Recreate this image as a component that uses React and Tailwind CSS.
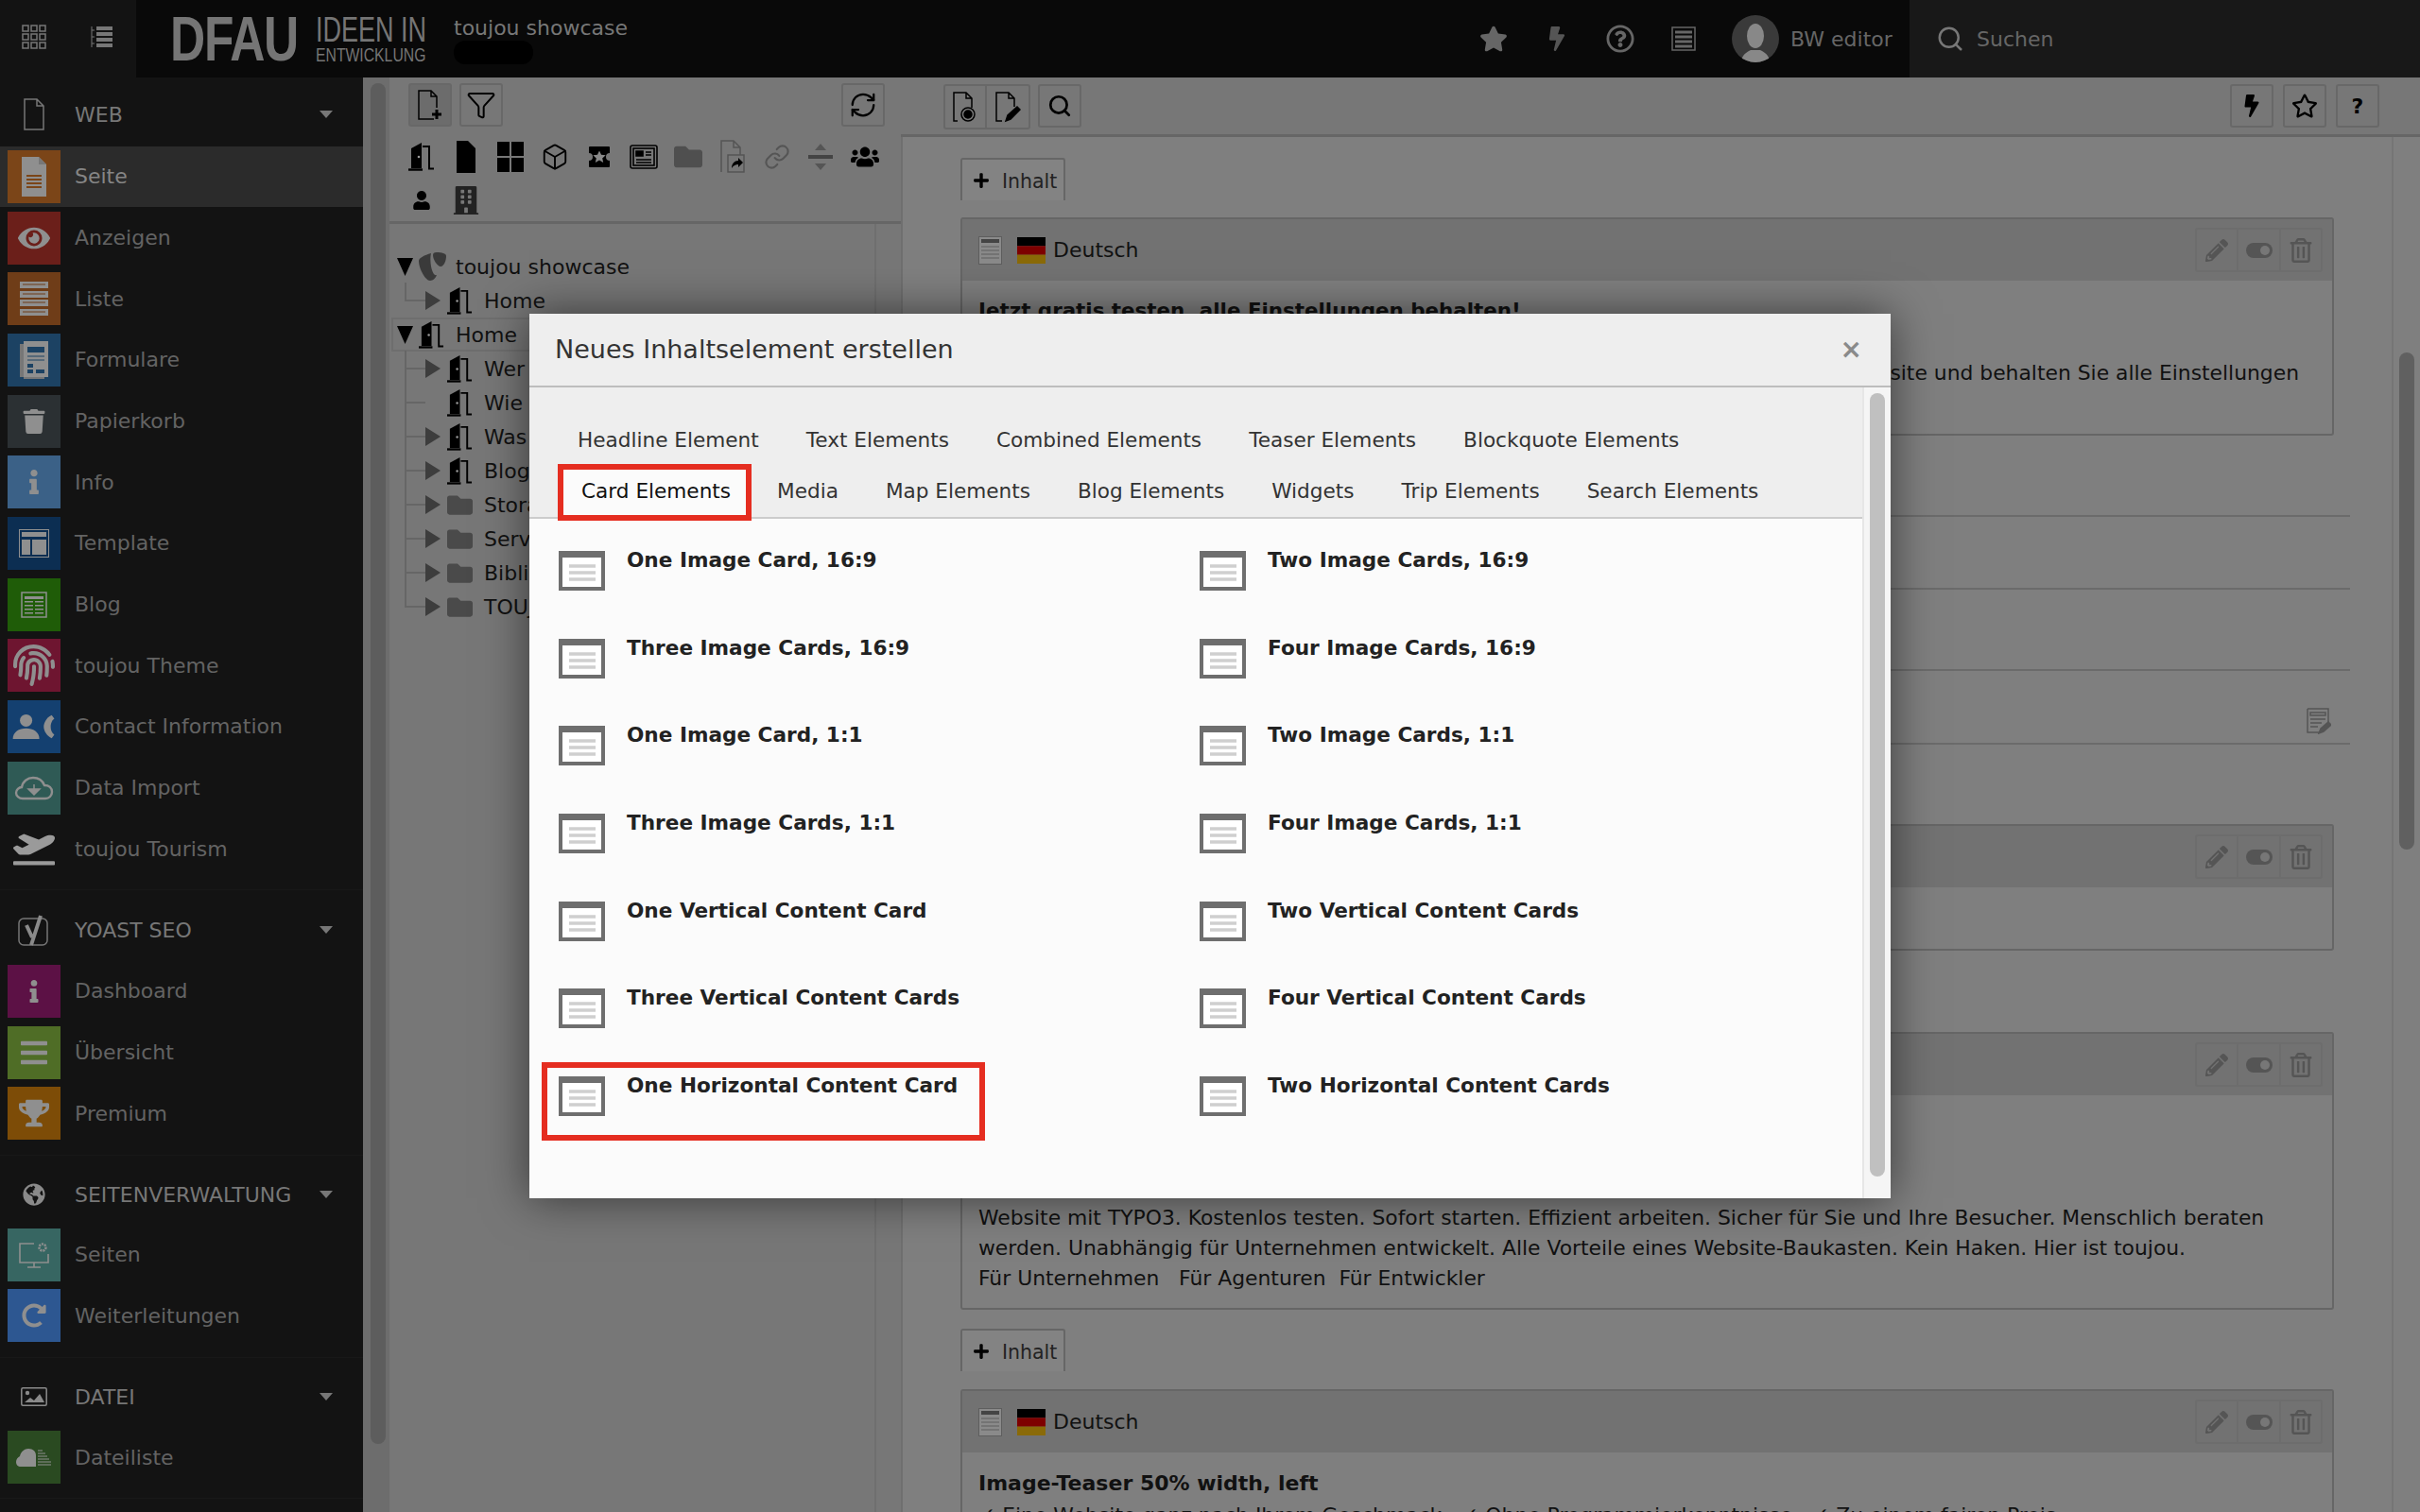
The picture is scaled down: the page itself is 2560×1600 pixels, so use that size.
import React from 'react';
import { FaEye, FaTrash, FaInfo, FaFingerprint, FaPlaneDeparture, FaBars, FaTrophy, FaGlobeAmericas, FaRedoAlt, FaStar, FaBolt, FaUsers, FaUser, FaBuilding, FaFolder, FaPencilAlt, FaRegStar, FaRegTrashAlt, FaRegQuestionCircle, FaPlus } from 'react-icons/fa';
import { Search, Box, Filter, RefreshCw, Link as LinkIcon } from 'lucide-react';

const Door = ({ c = '#000', s = 27 }) => (
  <svg width={s} height={s * 1.11} viewBox="0 0 28 31">
    <path d="M3 28V7L14 1v27z" fill={c} />
    <path d="M0 29.5h15" stroke={c} strokeWidth="2.4" />
    <path d="M15 5h7v23.5h5" fill="none" stroke={c} strokeWidth="2" />
    <circle cx="11" cy="16" r="1.3" fill="#999" />
  </svg>
);

const PageTile = () => (
  <svg width="26" height="42" viewBox="0 0 26 42"><path d="M0 0h18l8 8v34H0z" fill="#8f8f8f" /><path d="M18 0l8 8h-8z" fill="#777" /><path d="M5 20h16M5 24h16M5 28h16M5 32h16" stroke="#7b4518" strokeWidth="2" /></svg>
);
const ListTile = () => (
  <svg width="30" height="36" viewBox="0 0 30 36" fill="#8f8f8f"><path d="M0 0h30v7H0zM0 10h30v7H0zM0 19h30v7H0zM0 29h30v7H0z" /><path d="M3 3h24M3 13h24M3 22h24M3 32h24" stroke="#6f3d18" /></svg>
);
const FormTile = () => (
  <svg width="30" height="40" viewBox="0 0 30 40"><path d="M0 3h4v37h22v-2H0z" fill="#777" /><rect x="4" y="0" width="26" height="38" fill="#8f8f8f" /><path d="M8 6h18v6H8zM8 24h6v4H8zM8 30h6v4H8zM17 30h9v4h-9z" fill="#1c4263" /><path d="M8 16h18M8 20h18" stroke="#1c4263" /></svg>
);
const TemplateTile = () => (
  <svg width="32" height="30" viewBox="0 0 32 30"><rect x=".5" y=".5" width="31" height="29" fill="none" stroke="#8f8f8f" /><rect x="3" y="3" width="26" height="5" fill="#8f8f8f" /><rect x="3" y="11" width="9" height="16" fill="#8f8f8f" /><rect x="14" y="11" width="15" height="16" fill="#8f8f8f" /></svg>
);
const BlogTile = () => (
  <svg width="28" height="28" viewBox="0 0 28 28"><rect x="1" y="1" width="26" height="26" fill="none" stroke="#8f8f8f" strokeWidth="1.5" /><path d="M4 5h20v3H4zM4 10h9v1.6H4zM15 10h9v1.6h-9zM4 14h9v1.6H4zM15 14h9v1.6h-9zM4 18h9v1.6H4zM15 18h9v1.6h-9zM4 22h9v1.6H4zM15 22h9v1.6h-9z" fill="#8f8f8f" /></svg>
);
const ContactTile = () => (
  <svg width="46" height="28" viewBox="0 0 48 30" fill="#8f8f8f"><circle cx="15" cy="8" r="7" /><path d="M0 29c0-8 7-12 15-12s15 4 15 12z" /><path d="M44 2l3 4c-5 3-6 14 0 18l-3 4c-5-2-9-8-9-13s4-11 9-13z" /></svg>
);
const MonitorTile = () => (
  <svg width="32" height="28" viewBox="0 0 32 28" fill="none" stroke="#8f8f8f" strokeWidth="1.6"><path d="M16 2H1v20h30v-9M16 22v5M9 27h14" /><circle cx="25" cy="6" r="3.5" strokeWidth="2.5" strokeDasharray="2 1" /></svg>
);
const CloudDown = () => (
  <svg width="42" height="26" viewBox="0 0 42 26" fill="none" stroke="#8f8f8f" strokeWidth="2.4"><path d="M9 24c-4 0-7-3-7-6s3-6 6-6c1-6 6-10 12-10 6 0 10 3 12 8 5 0 8 3 8 7s-3 7-7 7z" /><path d="M21 9v6M15 14h12l-6 6z" fill="#8f8f8f" strokeWidth="1.5" /></svg>
);
const CloudList = () => (
  <svg width="38" height="20" viewBox="0 0 38 20" fill="#8f8f8f"><path d="M0 15c0-3 2-5 4-6 1-5 5-8 9-8 5 0 8 3 8 7v12H5c-3 0-5-2-5-5z" /><path d="M23 3h5M23 6h8M23 9h10M23 12h12M23 15h14M23 18h14" stroke="#8f8f8f" strokeWidth="1.2" /></svg>
);
const ImageIcon = () => (
  <svg width="28" height="20" viewBox="0 0 28 20"><rect x=".8" y=".8" width="26.400" height="18.400" rx="1.500" fill="none" stroke="#8a8a8a" strokeWidth="1.500" /><circle cx="7" cy="6" r="2.200" fill="#8a8a8a" /><path d="M4 16l6-5 4 3 6-7 5 9z" fill="#8a8a8a" /></svg>
);
const Yoast = () => (
  <svg width="34" height="34" viewBox="0 0 34 34" fill="none" stroke="#777"><rect x="1" y="5" width="30" height="28" rx="5" strokeWidth="1.5" /><path d="M9 12l6 13M24 2L14 33" strokeWidth="4" stroke="#8a8a8a" /></svg>
);
const PageOutline = () => (
  <svg width="22" height="34" viewBox="0 0 22 34" fill="none" stroke="#777" strokeWidth="1.5"><path d="M1 1h13l7 7v25H1zM14 1v7h7" /></svg>
);
const Triangle = () => (
  <svg width="14" height="8" viewBox="0 0 14 8"><path d="M0 0h14L7 8z" fill="#777" /></svg>
);
const Grid9 = () => (
  <svg width="26" height="26" viewBox="0 0 26 26" fill="none" stroke="#777" strokeWidth="1.5">
    {[1, 10, 19].map((y) => [1, 10, 19].map((x) => <rect key={x + '-' + y} x={x} y={y} width="6" height="6" />))}
  </svg>
);
const TreeList = () => (
  <svg width="24" height="24" viewBox="0 0 24 24" fill="#777"><path d="M1 1v22M1 5h3M1 12h3M1 19h3" stroke="#777" /><path d="M6 1h17v4H6zM6 7h17v4H6zM6 13h17v4H6zM6 19h17v4H6z" /></svg>
);
const ContentIcon = () => (
  <svg width="25" height="30" viewBox="0 0 25 30"><rect x=".5" y=".5" width="24" height="29" fill="#8a8a8a" stroke="#5e5e5e" /><rect x="3" y="3" width="19" height="4" fill="#444" /><path d="M3 11h19M3 15h19M3 19h19M3 23h19" stroke="#5e5e5e" /></svg>
);
const Flag = () => (
  <svg width="30" height="28" viewBox="0 0 30 28"><rect width="30" height="9.4" fill="#000" /><rect y="9.3" width="30" height="9.4" fill="#7e0000" /><rect y="18.6" width="30" height="9.4" fill="#8a6a08" /></svg>
);
const Toggle = () => (
  <svg width="28" height="16" viewBox="0 0 28 16"><rect width="28" height="16" rx="8" fill="#555" /><circle cx="20" cy="8" r="5" fill="#777" /></svg>
);
const CardIcon = () => (
  <svg width="49" height="42" viewBox="0 0 49 42"><rect width="49" height="42" fill="#6e6e6e" /><rect x="4" y="7" width="41" height="31" fill="#fff" /><path d="M11 16h28M11 23h28M11 30h28" stroke="#cfcfcf" strokeWidth="3.4" /></svg>
);
const Typo3 = () => (
  <svg width="29" height="30" viewBox="0 0 29 30"><path d="M13 1C6 3 0 6 0 9c0 8 7 21 12 21 3 0 6-3 7-6-5 2-8-15-6-23z" fill="#3a3a3a" /><path d="M19 0c-3 0-4 1-4 3 0 5 5 12 8 12 4 0 6-7 6-11 0-3-5-4-10-4z" fill="#3a3a3a" /></svg>
);
const TreeArrow = ({ down }) =>
  down ? (
    <svg width="17" height="19" viewBox="0 0 17 19"><path d="M0 0h17L8.500 19z" fill="#000" /></svg>
  ) : (
    <svg width="16" height="20" viewBox="0 0 16 20"><path d="M0 0l16 10L0 20z" fill="#3d3d3d" /></svg>
  );
const StarTicket = () => (
  <svg width="24" height="24" viewBox="0 0 24 24"><path d="M2 1h20a1 1 0 011 1v6a4 4 0 000 8v6a1 1 0 01-1 1H2a1 1 0 01-1-1v-6a4 4 0 000-8V2a1 1 0 011-1z" fill="#000" /><path d="M12 5.500l2 4.300 4.700.5-3.500 3.100 1 4.600-4.200-2.400-4.200 2.400 1-4.600-3.500-3.100 4.700-.5z" fill="#8a8a8a" /></svg>
);

const tile = 'w-14 h-14 flex items-center justify-center shrink-0';

const NavRow = ({ bg, icon, label, active }) => (
  <div className={`h-[64.67px] flex items-center pl-2 ${active ? 'bg-[#2b2b2b]' : ''}`}>
    <div className={tile} style={{ backgroundColor: bg }}>{icon}</div>
    <span className={`ml-[15px] text-[22px] ${active ? 'text-[#858585]' : 'text-[#636363]'}`}>{label}</span>
  </div>
);

const NavHead = ({ icon, label, cls }) => (
  <div className={`${cls} flex items-center pl-2 border-t border-[#181818]`}>
    <div className="w-14 flex justify-center shrink-0">{icon}</div>
    <span className="ml-[15px] text-[22px] text-[#777]">{label}</span>
    <span className="ml-auto mr-[32px] flex"><Triangle /></span>
  </div>
);

const I = 'text-[34px] text-[#8f8f8f]';

const Sidebar = () => (
  <div className="w-[384px] shrink-0 bg-[#131313] flex flex-col">
    <div className="h-[72.67px] flex items-center pl-2 pt-[6px]">
      <div className="w-14 flex justify-center"><PageOutline /></div>
      <span className="ml-[15px] text-[22px] text-[#777]">WEB</span>
      <span className="ml-auto mr-[32px] flex"><Triangle /></span>
    </div>
    <NavRow active bg="#7b4518" icon={<PageTile />} label="Seite" />
    <NavRow bg="#6b1f1a" icon={<FaEye className={I} />} label="Anzeigen" />
    <NavRow bg="#6f3d18" icon={<ListTile />} label="Liste" />
    <NavRow bg="#1c4263" icon={<FormTile />} label="Formulare" />
    <NavRow bg="#2b3033" icon={<FaTrash className="text-[26px] text-[#8f8f8f]" />} label="Papierkorb" />
    <NavRow bg="#3b6187" icon={<FaInfo className="text-[26px] text-[#8f8f8f]" />} label="Info" />
    <NavRow bg="#0c2e52" icon={<TemplateTile />} label="Template" />
    <NavRow bg="#1f5c08" icon={<BlogTile />} label="Blog" />
    <NavRow bg="#6e1530" icon={<FaFingerprint className="text-[44px] text-[#8f8f8f]" />} label="toujou Theme" />
    <NavRow bg="#144070" icon={<ContactTile />} label="Contact Information" />
    <NavRow bg="#2f5a55" icon={<CloudDown />} label="Data Import" />
    <NavRow bg="transparent" icon={<FaPlaneDeparture className="text-[44px] text-[#9a9a9a]" />} label="toujou Tourism" />
    <NavHead cls="mt-[10px] h-[76px] pt-[10px]" icon={<Yoast />} label="YOAST SEO" />
    <NavRow bg="#5c1145" icon={<FaInfo className="text-[24px] text-[#8f8f8f]" />} label="Dashboard" />
    <NavRow bg="#4f6d26" icon={<FaBars className="text-[32px] text-[#8f8f8f]" />} label="Übersicht" />
    <NavRow bg="#7d4c07" icon={<FaTrophy className="text-[32px] text-[#8f8f8f]" />} label="Premium" />
    <NavHead cls="mt-[11px] h-[74px] pt-[10px]" icon={<FaGlobeAmericas className="text-[24px] text-[#8a8a8a]" />} label="SEITENVERWALTUNG" />
    <NavRow bg="#376662" icon={<MonitorTile />} label="Seiten" />
    <NavRow bg="#2d5791" icon={<FaRedoAlt className="text-[26px] text-[#8f8f8f]" />} label="Weiterleitungen" />
    <NavHead cls="mt-[11px] h-[74px] pt-[10px]" icon={<ImageIcon />} label="DATEI" />
    <NavRow bg="#2a4a21" icon={<CloudList />} label="Dateiliste" />
    <div className="mt-[11px] border-t border-[#181818]" />
  </div>
);

const Btn = ({ children, cls = '' }) => (
  <div className={`w-[46px] h-[46px] rounded-[3px] border-2 border-[#686868] flex items-center justify-center ${cls}`}>{children}</div>
);

const FileAdd = () => (
  <svg width="28" height="34" viewBox="0 0 28 34" fill="none" stroke="#000" strokeWidth="1.5"><path d="M18 32H2V2h13l6 6v12M15 2v6h6" /><path d="M21 22v10M16 27h10" strokeWidth="3" /></svg>
);
const FileEye = () => (
  <svg width="28" height="34" viewBox="0 0 28 34" fill="none" stroke="#000" strokeWidth="1.5"><path d="M6 32H2V2h13l6 6v10M15 2v6h6" /><circle cx="17" cy="25" r="7" /><circle cx="17" cy="25" r="4" fill="#000" /></svg>
);
const FileEdit = () => (
  <svg width="28" height="34" viewBox="0 0 28 34" fill="none" stroke="#000" strokeWidth="1.5"><path d="M8 32H2V2h13l6 6v9M15 2v6h6" /><path d="M12 32l2-6 10-9 3 3-10 10z" fill="#000" /></svg>
);
const FileLink = () => (
  <svg width="26" height="36" viewBox="0 0 26 36" fill="none" stroke="#555" strokeWidth="1.5"><path d="M1 34V1h13l7 7v8M14 1v7h7" /><rect x="8" y="16" width="17" height="18" fill="#777" /><path d="M12 30c0-5 3-8 7-8v-3l5 5-5 5v-3c-3 0-5 1-7 4z" fill="#000" stroke="none" /></svg>
);
const NewsIcon = () => (
  <svg width="30" height="26" viewBox="0 0 30 26" fill="none" stroke="#000" strokeWidth="1.6"><rect x="1" y="1" width="28" height="24" rx="2" /><rect x="4" y="4" width="22" height="18" /><path d="M7 7h7v5H7zM17 8h6M17 11h6M7 16h16M7 19h16" fill="#000" /></svg>
);
const Divider = () => (
  <svg width="26" height="28" viewBox="0 0 26 28"><path d="M13 0l6 7H7zM13 28l-6-7h12z" fill="#555" /><rect y="12" width="26" height="4" fill="#444" /></svg>
);
const FileSolid = () => (
  <svg width="20" height="34" viewBox="0 0 20 34"><path d="M0 0h12l8 8v26H0z" fill="#000" /></svg>
);
const Quad = () => (
  <svg width="28" height="32" viewBox="0 0 28 32"><path d="M0 0h13v15H0zM15 0h13v15H15zM0 17h13v15H0zM15 17h13v15H15z" fill="#000" /></svg>
);

const TreeLines = ({ v }) => (
  <>
    <span className={`absolute left-[16px] w-[2px] bg-[#666] ${v}`} />
    <span className="absolute left-[16px] top-[17px] w-[22px] h-[2px] bg-[#666]" />
  </>
);

const TreeRow = ({ label, folder, arrow = true, v = '-top-[1px] h-[37px]' }) => (
  <div className="relative h-9 flex items-center pl-[38px]">
    <TreeLines v={v} />
    <span className="w-[23px] flex shrink-0">{arrow && <TreeArrow />}</span>
    {folder ? <FaFolder className="text-[27px] text-[#4a4a4a] shrink-0" /> : <Door />}
    <span className="ml-[12px] text-[22px] text-[#111] whitespace-nowrap">{label}</span>
  </div>
);

const TreePanel = () => (
  <div className="w-[541px] shrink-0 flex flex-col bg-[#777] relative">
    <div className="flex justify-between pl-5 pr-[17px] pt-[6px] h-[61px]">
      <div className="flex gap-2">
        <Btn cls="bg-[#6c6c6c] border-[#5e5e5e]"><FileAdd /></Btn>
        <Btn><Filter size={32} strokeWidth={1.5} color="#000" /></Btn>
      </div>
      <Btn><RefreshCw size={30} strokeWidth={1.8} color="#000" /></Btn>
    </div>
    <div className="flex flex-wrap content-start pl-[11px] h-[94px] border-b-[3px] border-[#666]">
      {[
        <Door s={28} />, <FileSolid />, <Quad />,
        <Box size={30} strokeWidth={1.5} color="#000" />, <StarTicket />, <NewsIcon />,
        <FaFolder className="text-[30px] text-[#4f4f4f]" />, <FileLink />, <LinkIcon size={28} strokeWidth={1.8} color="#555" />, <Divider />,
        <FaUsers className="text-[30px] text-black" />, <FaUser className="text-[20px] text-black" />, <FaBuilding className="text-[30px] text-[#222]" />,
      ].map((ic, i) => (
        <div key={i} className="w-[46.9px] h-[46px] flex items-center justify-center">{ic}</div>
      ))}
    </div>
    <div className="flex-1 pt-[27px] border-r-2 border-[#6f6f6f] mr-[26px]">
      <div className="relative h-9 flex items-center pl-2">
        <span className="w-[23px] flex shrink-0"><TreeArrow down /></span>
        <Typo3 />
        <span className="ml-[10px] text-[22px] text-[#111] whitespace-nowrap">toujou showcase</span>
      </div>
      <TreeRow label="Home" v="-top-[1px] h-[19px]" />
      <div className="relative h-9 flex items-center pl-1 border-2 border-[#6e6e6e] ml-[2px]">
        <span className="w-[23px] flex shrink-0"><TreeArrow down /></span>
        <Door />
        <span className="ml-[12px] text-[22px] text-[#111] whitespace-nowrap">Home</span>
      </div>
      <TreeRow label="Wer" />
      <TreeRow label="Wie" arrow={false} />
      <TreeRow label="Was" />
      <TreeRow label="Blog" />
      <TreeRow label="Storage" folder />
      <TreeRow label="Service" folder />
      <TreeRow label="Bibliothek" folder />
      <TreeRow label="TOUJOU" folder v="-top-[1px] h-[19px]" />
    </div>
  </div>
);

const Card = ({ h, children }) => (
  <div className={`w-[1453px] border-2 border-[#666] rounded-[3px] ${h}`}>
    <div className="h-[65px] bg-[#727272] flex items-center pl-[17px] pr-[10px]">
      <ContentIcon />
      <span className="ml-4 flex"><Flag /></span>
      <span className="ml-2 text-[22px] text-[#111]">Deutsch</span>
      <div className="ml-auto w-[135px] h-[47px] flex border-2 border-[#6d6d6d] rounded-[3px]">
        <div className="w-[44px] flex items-center justify-center border-r-2 border-[#6d6d6d]"><FaPencilAlt className="text-[24px] text-[#555]" /></div>
        <div className="w-[45px] flex items-center justify-center border-r-2 border-[#6d6d6d]"><Toggle /></div>
        <div className="flex-1 flex items-center justify-center"><FaRegTrashAlt className="text-[26px] text-[#555]" /></div>
      </div>
    </div>
    <div className="pl-[17px] pr-4 text-[21.85px] text-[#111]">{children}</div>
  </div>
);

const Inhalt = ({ cls }) => (
  <div className={`${cls} w-[111px] h-[45px] rounded-t-[3px] border-2 border-b-0 border-[#666] bg-[#838383] flex items-center pl-[11px]`}>
    <FaPlus className="text-[18px] text-black" />
    <span className="ml-[13px] mt-[3px] text-[20.5px] text-[#222]">Inhalt</span>
  </div>
);

const EditLines = () => (
  <svg width="26" height="28" viewBox="0 0 26 28" fill="none" stroke="#555" strokeWidth="1.5"><path d="M1 1h22v14M1 1v25h12M4 5h16v3H4zM4 12h16M4 16h12M4 20h8" /><path d="M13 27l2-5 8-7 3 3-8 7z" fill="#555" /></svg>
);

const RightPanel = () => (
  <div className="flex-1 flex flex-col bg-[#7f7f7f] overflow-hidden">
    <div className="h-[63px] shrink-0 bg-[#777] border-b-[3px] border-[#666] flex items-start pt-[7px] pl-[45px] pr-[43px]">
      <div className="flex rounded-[3px] border-2 border-[#686868]">
        <div className="w-[44px] h-[44px] flex items-center justify-center border-r-2 border-[#686868]"><FileEye /></div>
        <div className="w-[44px] h-[44px] flex items-center justify-center"><FileEdit /></div>
      </div>
      <Btn cls="ml-[8px]"><Search size={26} strokeWidth={2.5} color="#000" /></Btn>
      <div className="ml-auto flex gap-[10px]">
        <Btn><FaBolt className="text-[24px] text-black" /></Btn>
        <Btn><FaRegStar className="text-[28px] text-black" /></Btn>
        <Btn><span className="text-[22px] font-bold text-black">?</span></Btn>
      </div>
    </div>
    <div className="flex-1 flex overflow-hidden">
      <div className="w-[1577px] shrink-0 pl-[61px] border-l-2 border-[#6f6f6f] pt-[22px]">
        <Inhalt />
        <div className="mt-[18px]">
          <Card h="h-[231px]">
            <p className="mt-[21px] text-[21.4px] font-bold whitespace-nowrap leading-[22px]">Jetzt gratis testen, alle Einstellungen behalten!</p>
            <p className="mt-[44px] pr-[19px] whitespace-nowrap leading-[22px] flex justify-end">Website und behalten Sie alle Einstellungen</p>
          </Card>
        </div>
        <div className="mt-[84px] w-[1470px] border-t-2 border-[#6b6b6b] h-[77px]" />
        <div className="w-[1470px] border-t-2 border-[#6b6b6b] h-[86px]" />
        <div className="w-[1470px] border-t-2 border-b-2 border-[#6b6b6b] h-[80px] flex items-end justify-end pb-[9px] pr-[20px]"><EditLines /></div>
        <div className="mt-[84px]"><Card h="h-[134px]" /></div>
        <div className="mt-[86px]">
          <Card h="h-[294px]">
            <div className="mt-[114px] leading-[32.2px] whitespace-nowrap">
              <p>Website mit TYPO3. Kostenlos testen. Sofort starten. Effizient arbeiten. Sicher für Sie und Ihre Besucher. Menschlich beraten</p>
              <p>werden. Unabhängig für Unternehmen entwickelt. Alle Vorteile eines Website-Baukasten. Kein Haken. Hier ist toujou.</p>
              <p>Für Unternehmen &nbsp; Für Agenturen &nbsp;Für Entwickler</p>
            </div>
          </Card>
        </div>
        <Inhalt cls="mt-[20px]" />
        <div className="mt-[19px]">
          <Card h="h-[300px]">
            <p className="mt-[21px] text-[22px] font-bold leading-[24px]">Image-Teaser 50% width, left</p>
            <p className="mt-[10px] whitespace-nowrap leading-[24px]">✓ Eine Website ganz nach Ihrem Geschmack &nbsp; ✓ Ohne Programmierkenntnisse &nbsp; ✓ Zu einem fairen Preis</p>
          </Card>
        </div>
      </div>
      <div className="flex-1 border-l-2 border-[#757575] pl-[6px]">
        <div className="mt-[228px] w-4 h-[526px] rounded-lg bg-[#606060]" />
      </div>
    </div>
  </div>
);

const TopIcon = ({ children }) => <div className="w-[67px] flex justify-center">{children}</div>;

const Topbar = () => (
  <div className="h-[82px] shrink-0 flex bg-[#090909]">
    <div className="w-[144px] bg-[#131313] flex items-center pb-[4px]">
      <div className="w-[72px] flex justify-center"><Grid9 /></div>
      <div className="w-[72px] flex justify-center"><TreeList /></div>
    </div>
    <div className="w-[336px] pl-[36px] flex items-center gap-[19px] overflow-hidden">
      <span className="font-['Liberation_Sans',sans-serif] font-bold text-[66px] leading-none text-[#757575] origin-left scale-x-[0.78] w-[135px] shrink-0 tracking-tight">DFAU</span>
      <div className="font-['Liberation_Sans',sans-serif] text-[#757575] flex flex-col w-[116px] shrink-0">
        <span className="text-[37px] leading-[34px] origin-left scale-x-[0.73] whitespace-nowrap">IDEEN IN</span>
        <span className="text-[21px] leading-[18px] origin-left scale-x-[0.75] whitespace-nowrap">ENTWICKLUNG</span>
      </div>
    </div>
    <div className="flex flex-col">
      <span className="text-[22px] leading-[26px] mt-[17px] text-[#777]">toujou showcase</span>
      <span className="w-[84px] h-[25px] rounded-xl bg-black" />
    </div>
    <div className="ml-auto flex items-center">
      <TopIcon><FaStar className="text-[30px] text-[#666]" /></TopIcon>
      <TopIcon><FaBolt className="text-[26px] text-[#555]" /></TopIcon>
      <TopIcon><FaRegQuestionCircle className="text-[30px] text-[#666]" /></TopIcon>
      <TopIcon><svg width="26" height="26" viewBox="0 0 26 26" fill="none" stroke="#666" strokeWidth="1.5"><rect x="1" y="1" width="24" height="24" /><path d="M4 6h18M4 11h18M4 16h18M4 21h18" strokeWidth="3" /></svg></TopIcon>
      <div className="ml-[18px] w-[50px] h-[50px] rounded-full bg-[#3a3a3a] overflow-hidden flex items-end justify-center">
        <svg width="34" height="42" viewBox="0 0 34 42" fill="#888"><ellipse cx="17" cy="14" rx="9" ry="13" /><path d="M2 42c0-8 6-11 10-13h10c4 2 10 5 10 13z" /></svg>
      </div>
      <span className="ml-[12px] mr-[20px] text-[22px] text-[#666] w-[106px] whitespace-nowrap">BW editor</span>
      <div className="w-[540px] h-full bg-[#181818] flex items-center pl-[28px]">
        <Search size={30} strokeWidth={2} color="#777" />
        <span className="ml-[13px] text-[22px] text-[#666]">Suchen</span>
      </div>
    </div>
  </div>
);

const items = [
  ['One Image Card, 16:9', 'Two Image Cards, 16:9'],
  ['Three Image Cards, 16:9', 'Four Image Cards, 16:9'],
  ['One Image Card, 1:1', 'Two Image Cards, 1:1'],
  ['Three Image Cards, 1:1', 'Four Image Cards, 1:1'],
  ['One Vertical Content Card', 'Two Vertical Content Cards'],
  ['Three Vertical Content Cards', 'Four Vertical Content Cards'],
  ['One Horizontal Content Card', 'Two Horizontal Content Cards'],
];

const Item = ({ label, boxed }) => (
  <div className="relative flex items-start">
    <span className="flex shrink-0"><CardIcon /></span>
    <span className="ml-[23px] text-[21.6px] leading-[20px] font-bold text-[#222] whitespace-nowrap">{label}</span>
    {boxed && <span className="absolute -left-[18px] -top-[15px] w-[469px] h-[83px] border-[6px] border-[#e52d20]" />}
  </div>
);

const tabText = 'text-[21.6px] text-[#333] whitespace-nowrap';

const Modal = () => (
  <div className="absolute left-[560px] top-[332px] w-[1440px] h-[936px] flex flex-col bg-[#fbfbfb] shadow-[0_0_45px_rgba(0,0,0,0.55)]">
    <div className="h-[78px] shrink-0 bg-[#eee] border-b-[2px] border-[#bdbdbd] flex items-center pl-[27px] pr-[30px] justify-between">
      <span className="text-[27px] text-[#333]">Neues Inhaltselement erstellen</span>
      <span className="text-[28px] font-bold text-[#8a8a8a] leading-none">×</span>
    </div>
    <div className="flex-1 flex">
      <div className="w-[1410px]">
        <div className="h-[139px] bg-[#eee] border-b-2 border-[#ccc] pt-[31px] relative">
          <div className="flex pl-[26px] h-[50px] items-center">
            {['Headline Element', 'Text Elements', 'Combined Elements', 'Teaser Elements', 'Blockquote Elements'].map((t) => (
              <span key={t} className={`${tabText} px-[25px]`}>{t}</span>
            ))}
          </div>
          <div className="flex pl-[30px] h-[60px] items-center">
            <span className="h-[60px] pl-[19px] pr-[16px] pb-[2px] bg-[#fbfbfb] border-[6px] border-[#e52d20] flex items-center text-[21.6px] text-[#111] whitespace-nowrap">Card Elements</span>
            {['Media', 'Map Elements', 'Blog Elements', 'Widgets', 'Trip Elements', 'Search Elements'].map((t, i) => (
              <span key={t} className={`${tabText} pb-[2px] ${i === 0 ? 'pl-[27px] pr-[25px]' : 'px-[25px]'}`}>{t}</span>
            ))}
          </div>
        </div>
        <div className="pt-[34px] pl-[31px] grid grid-cols-[678px_678px] auto-rows-[92.7px]">
          {items.flatMap((row, i) => row.map((l, j) => <Item key={l} label={l} boxed={i === 6 && j === 0} />))}
        </div>
      </div>
      <div className="flex-1 bg-[#f5f5f5] border-l-2 border-[#e6e6e6] pl-[6px] pt-[6px]">
        <div className="w-4 h-[829px] rounded-lg bg-[#c0c0c0]" />
      </div>
    </div>
  </div>
);

export default function App() {
  return (
    <div className="relative w-[2560px] h-[1600px] overflow-hidden flex flex-col font-['DejaVu_Sans',sans-serif] bg-[#7f7f7f]">
      <Topbar />
      <div className="flex-1 flex overflow-hidden">
        <Sidebar />
        <div className="w-7 shrink-0 bg-[#6d6d6d] px-2 pt-[6px]">
          <div className="w-4 h-[1440px] rounded-lg bg-[#5d5d5d]" />
        </div>
        <TreePanel />
        <RightPanel />
      </div>
      <Modal />
    </div>
  );
}
